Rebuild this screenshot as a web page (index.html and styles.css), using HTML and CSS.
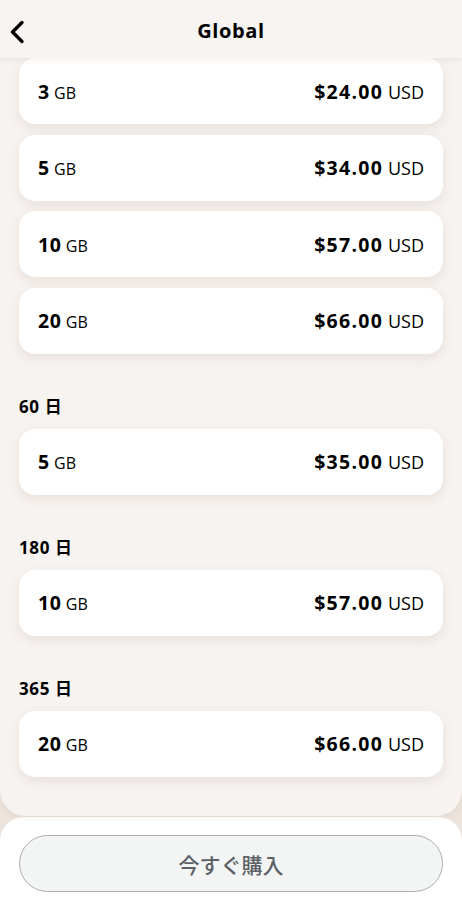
FILE: index.html
```html
<!DOCTYPE html>
<html lang="ja">
<head>
<meta charset="utf-8">
<title>Global</title>
<link rel="stylesheet" href="styles.css">
</head>
<body>
<div class="app">
  <header class="topbar">
    <button class="back" aria-label="戻る">
      <svg width="16" height="24" viewBox="0 0 16 24"><path d="M13 2.5 L3.5 12 L13 21.5" fill="none" stroke="#000" stroke-width="3.4" stroke-linecap="round" stroke-linejoin="round"/></svg>
    </button>
    <h1 class="title">Global</h1>
  </header>

  <main class="panel">
    <section class="group">
      <div class="card"><span class="amt"><b>3</b> GB</span><span class="price"><b>$24.00</b> USD</span></div>
      <div class="card"><span class="amt"><b>5</b> GB</span><span class="price"><b>$34.00</b> USD</span></div>
      <div class="card"><span class="amt"><b>10</b> GB</span><span class="price"><b>$57.00</b> USD</span></div>
      <div class="card"><span class="amt"><b>20</b> GB</span><span class="price"><b>$66.00</b> USD</span></div>
    </section>
    <section class="group">
      <h2 class="label">60 日</h2>
      <div class="card"><span class="amt"><b>5</b> GB</span><span class="price"><b>$35.00</b> USD</span></div>
    </section>
    <section class="group">
      <h2 class="label">180 日</h2>
      <div class="card"><span class="amt"><b>10</b> GB</span><span class="price"><b>$57.00</b> USD</span></div>
    </section>
    <section class="group">
      <h2 class="label">365 日</h2>
      <div class="card"><span class="amt"><b>20</b> GB</span><span class="price"><b>$66.00</b> USD</span></div>
    </section>
  </main>

  <footer class="sheet">
    <button class="buy">今すぐ購入</button>
  </footer>
</div>
</body>
</html>
```

FILE: styles.css
```css
* { box-sizing: border-box; }
html, body { margin: 0; padding: 0; }
body {
  background: #ece3dc;
  font-family: "Open Sans", "Noto Sans CJK JP", sans-serif;
  color: #000;
  width: 462px;
  height: 918px;
  overflow: hidden;
}
.app {
  display: flex;
  flex-direction: column;
  height: 918px;
}
.topbar {
  height: 58px;
  flex: none;
  background: #f8f4f1;
  display: flex;
  align-items: center;
  justify-content: center;
  position: relative;
  z-index: 2;
  box-shadow: 0 2px 6px rgba(90, 60, 40, 0.08);
}
.back {
  position: absolute;
  left: 9px;
  top: 20px;
  border: 0;
  background: none;
  padding: 0;
  width: 18px;
  height: 24px;
  display: flex;
}
.title {
  margin: 0;
  font-size: 20px;
  letter-spacing: 0.6px;
  font-weight: 700;
  line-height: 24px;
  margin-top: 3px;
}
.panel {
  flex: none;
  height: 758px;
  background: #f7f3f0;
  border-radius: 0 0 26px 26px;
  padding: 0 19px;
  display: flex;
  flex-direction: column;
  box-shadow: 0 2px 6px rgba(120, 90, 70, 0.08);
  position: relative;
  z-index: 1;
}
.group {
  display: flex;
  flex-direction: column;
  gap: 11px;
}
.group + .group { margin-top: 42px; }
.group:first-child { gap: 10.5px; }
.label {
  margin: 0;
  font-size: 17px;
  letter-spacing: 0.6px;
  font-weight: 700;
  line-height: 22px;
}
.card {
  height: 66px;
  background: #fff;
  border-radius: 16px;
  display: flex;
  align-items: center;
  justify-content: space-between;
  padding: 0 19px 0 19px;
  box-shadow: 0 4px 12px rgba(120, 90, 70, 0.12);
}
.amt { font-size: 16px; }
.amt b { font-size: 19.5px; font-weight: 700; letter-spacing: 0.7px; }
.price { font-size: 18px; }
.price b { font-size: 19.5px; font-weight: 700; letter-spacing: 1.3px; }
.sheet {
  flex: none;
  margin-top: 1px;
  height: 101px;
  background: #fff;
  border-radius: 24px 24px 0 0;
  padding: 18px 19px 0;
}
.buy {
  width: 100%;
  height: 57px;
  border: 1px solid #a9aeb1;
  border-radius: 29px;
  background: #f3f5f4;
  color: #5b6166;
  font-family: "Noto Sans CJK JP", sans-serif;
  font-size: 21px;
  font-weight: 500;
  padding: 0;
}
```
